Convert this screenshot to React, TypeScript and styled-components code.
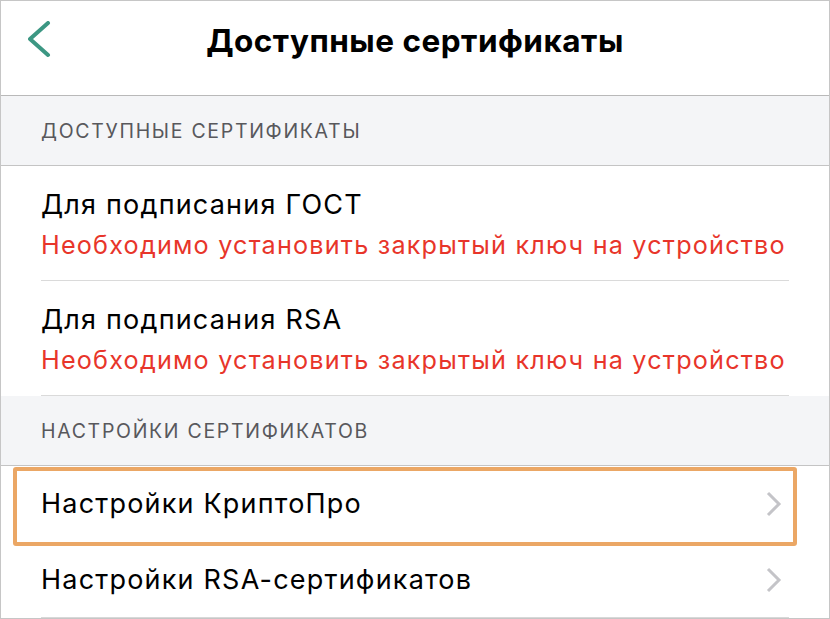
import styled, { createGlobalStyle } from "styled-components";

const GlobalStyle = createGlobalStyle`
  html, body {
    margin: 0;
    padding: 0;
    background: #ffffff;
  }
  body {
    font-family: Inter, Roboto, "Noto Sans", "Liberation Sans", sans-serif;
    -webkit-font-smoothing: antialiased;
  }
`;

const Frame = styled.div`
  width: 830px;
  height: 619px;
  box-sizing: border-box;
  border: 1px solid #c6c6c6;
  background: #ffffff;
  overflow: hidden;
  display: flex;
  flex-direction: column;
`;

const NavBar = styled.header`
  height: 94px;
  flex: none;
  display: grid;
  grid-template-columns: 120px 1fr 120px;
  align-items: start;
  border-bottom: 1px solid #b9b9b9;
`;

const BackButton = styled.button`
  border: none;
  background: none;
  padding: 0;
  margin: 19px 0 0 25px;
  width: 30px;
  height: 42px;
  cursor: pointer;
  display: flex;
  align-items: center;
  justify-content: center;
`;

const Title = styled.h1`
  margin: 0;
  padding-top: 20px;
  text-align: center;
  font-size: 31.5px;
  line-height: 40px;
  font-weight: 700;
  letter-spacing: 0.5px;
  color: #000000;
`;

const SectionHeader = styled.div`
  height: 69px;
  flex: none;
  display: flex;
  align-items: center;
  padding-left: 40px;
  background: #f4f5f7;
  border-bottom: 1px solid #c4c4c4;
  font-size: 19.5px;
  color: #58585c;
  text-transform: uppercase;
  letter-spacing: 1.7px;
`;

const Row = styled.div<{ $highlight?: boolean }>`
  position: relative;
  flex: none;
  padding-left: 40px;
  padding-right: 40px;

  &::after {
    content: "";
    display: ${(p) => (p.$highlight ? "block" : "none")};
    position: absolute;
    top: 1px;
    left: 12px;
    right: 32px;
    bottom: -4px;
    border: 4px solid #eba765;
    border-radius: 3px;
    pointer-events: none;
  }
`;

const RowBody = styled.div<{ $last?: boolean }>`
  display: flex;
  align-items: center;
  border-bottom: 1px solid ${(p) => (p.$last ? "#d8d8d8" : "transparent")};
`;

const CertBody = styled.div`
  padding: 19px 0 15px;
  border-bottom: 1px solid #dadada;
`;

const RowTitle = styled.div`
  font-size: 27px;
  line-height: 40px;
  letter-spacing: 1.2px;
  color: #000000;
`;

const RowError = styled.div`
  font-size: 25.2px;
  line-height: 40px;
  letter-spacing: 1.2px;
  color: #e8352a;
`;

const NavLabel = styled.div`
  flex: 1;
  font-size: 27px;
  line-height: 75px;
  letter-spacing: 1.2px;
  color: #000000;
`;

const Chevron = styled.svg`
  flex: none;
  margin-right: 6px;
`;

const BackIcon = () => (
  <svg width="26" height="40" viewBox="0 0 26 40">
    <path
      d="M20 2 L2 18 L20 34"
      fill="none"
      stroke="#3c9783"
      strokeWidth="4"
      strokeLinecap="round"
      strokeLinejoin="round"
    />
  </svg>
);

const certs = [
  { title: "Для подписания ГОСТ", error: "Необходимо установить закрытый ключ на устройство" },
  { title: "Для подписания RSA", error: "Необходимо установить закрытый ключ на устройство" },
];

const settings = [
  { label: "Настройки КриптоПро", highlight: true },
  { label: "Настройки RSA-сертификатов", highlight: false },
];

export default function App() {
  return (
    <>
      <GlobalStyle />
      <Frame>
        <NavBar>
          <BackButton aria-label="Назад">
            <BackIcon />
          </BackButton>
          <Title>Доступные сертификаты</Title>
          <div />
        </NavBar>

        <SectionHeader>Доступные сертификаты</SectionHeader>
        {certs.map((c) => (
          <Row key={c.title}>
            <CertBody>
              <RowTitle>{c.title}</RowTitle>
              <RowError>{c.error}</RowError>
            </CertBody>
          </Row>
        ))}

        <SectionHeader>Настройки сертификатов</SectionHeader>
        {settings.map((s, i) => (
          <Row key={s.label} $highlight={s.highlight}>
            <RowBody $last={i === settings.length - 1}>
              <NavLabel>{s.label}</NavLabel>
              <Chevron width="18" height="26" viewBox="0 0 18 26">
                <path
                  d="M3 2 L14 13 L3 24"
                  fill="none"
                  stroke="#c4c4c8"
                  strokeWidth="3"
                />
              </Chevron>
            </RowBody>
          </Row>
        ))}
      </Frame>
    </>
  );
}
